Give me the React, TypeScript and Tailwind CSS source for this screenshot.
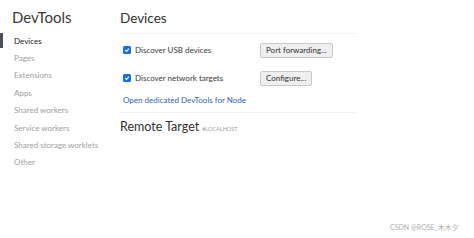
import React from "react";

const items = ["Devices", "Pages", "Extensions", "Apps", "Shared workers", "Service workers", "Shared storage worklets", "Other"];

function Check() {
  return (
    <span className="w-[8px] h-[8px] rounded-[1.5px] bg-[#1a6fd6] flex items-center justify-center shrink-0">
      <svg width="6" height="6" viewBox="0 0 10 10"><path d="M2 5.2 L4.2 7.4 L8.2 2.8" stroke="white" strokeWidth="1.8" fill="none" /></svg>
    </span>
  );
}

export default function App() {
  return (
    <div className="w-[474px] h-[238px] bg-white relative flex font-['Lato',sans-serif] text-[#3a3a3a] overflow-hidden">
      <div className="w-[110px] shrink-0 pt-[7px]">
        <div className="pl-[12px] text-[15px] leading-[20px] text-[#3a3a3a]">DevTools</div>
        <div className="mt-[5px] flex flex-col">
          {items.map((t, i) => (
            <div key={t} className={"relative h-[17.4px] flex items-center pl-[14px] text-[8px] whitespace-nowrap " + (i === 0 ? "text-[#202020]" : "text-[#a0a0a0]")}>
              {i === 0 && <span className="absolute left-0 top-[1px] bottom-[1px] w-[3px] bg-[#4a4f5a]" />}
              {t}
            </div>
          ))}
        </div>
      </div>
      <div className="flex-1 pt-[8px] pl-[10px]">
        <div className="text-[13.5px] leading-[20px] text-[#303030]">Devices</div>
        <div className="mt-[5px] w-[236px] border-t border-[#f2f2f2]" />
        <div className="pl-[3px] pt-[8px]">
          <div className="flex items-center h-[16px]">
            <Check />
            <span className="ml-[4px] w-[125px] text-[8px]">Discover USB devices</span>
            <span className="h-[15px] px-[5px] border border-[#c8c8c8] bg-[#efefef] rounded-[2px] text-[8px] text-[#303030] flex items-center">Port forwarding...</span>
          </div>
          <div className="flex items-center h-[16px] mt-[12px]">
            <Check />
            <span className="ml-[4px] w-[125px] text-[8px]">Discover network targets</span>
            <span className="h-[15px] px-[5px] border border-[#c8c8c8] bg-[#efefef] rounded-[2px] text-[8px] text-[#303030] flex items-center">Configure...</span>
          </div>
          <div className="mt-[8px] text-[8px] text-[#3563b5]">Open dedicated DevTools for Node</div>
        </div>
        <div className="mt-[6px] w-[236px] border-t border-[#f2f2f2]" />
        <div className="mt-[5px] flex items-baseline">
          <span className="text-[12.5px] text-[#303030]">Remote Target</span>
          <span className="ml-[3px] text-[5.5px] text-[#a0a0a0]">#LOCALHOST</span>
        </div>
      </div>
      <div className="absolute left-[390px] top-[222px] text-[7px] text-[#b0b0b0] font-['Lato','Noto_Sans_CJK_SC',sans-serif]">CSDN @ROSE_木木夕</div>
    </div>
  );
}
